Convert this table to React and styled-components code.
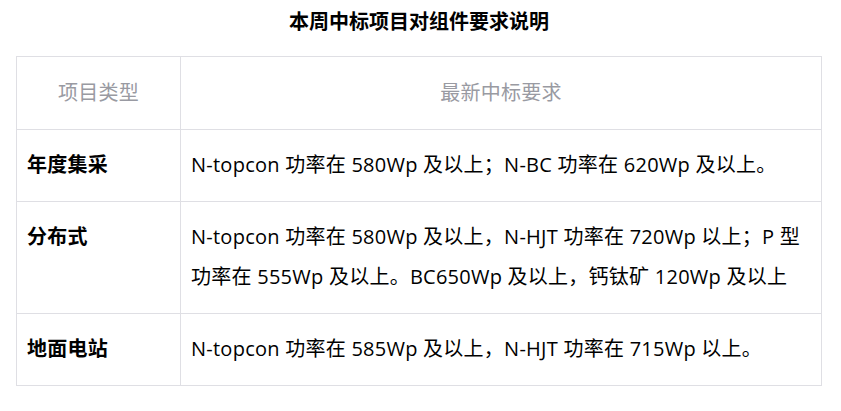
import React from 'react';
import styled, { createGlobalStyle } from 'styled-components';

const GlobalStyle = createGlobalStyle`
  body {
    margin: 0;
    background: #ffffff;
    font-family: "Liberation Sans", "Noto Sans CJK SC", sans-serif;
  }
`;

// 페이지 전체
const Page = styled.div`
  padding: 7px 19px 0 16px;
`;

const Title = styled.h2`
  margin: 0 0 21px;
  text-align: center;
  font-size: 20px;
  line-height: 28px;
  font-weight: 700;
  color: #000;
  font-family: "Noto Sans CJK SC", sans-serif;
`;

const Table = styled.table`
  width: 100%;
  border-collapse: collapse;
  table-layout: fixed;
  font-family: "Open Sans", "Noto Sans CJK SC", sans-serif;
  font-size: 20px;
  line-height: 40px;
  letter-spacing: 0.25px;
  color: #000;
`;

const HeadCell = styled.th`
  border: 1px solid #dfdfe4;
  padding: 16px 10px 16px;
  font-weight: 400;
  color: #999aa2;
  text-align: center;
  width: ${(p) => p.$width || 'auto'};
`;

const Cell = styled.td`
  border: 1px solid #dfdfe4;
  padding: 15px 10px 16px;
  vertical-align: top;
  font-weight: ${(p) => (p.$bold ? 700 : 400)};
`;

const rows = [
  {
    type: '年度集采',
    text: 'N-topcon 功率在 580Wp 及以上；N-BC 功率在 620Wp 及以上。',
  },
  {
    type: '分布式',
    text: 'N-topcon 功率在 580Wp 及以上，N-HJT 功率在 720Wp 以上；P 型功率在 555Wp 及以上。BC650Wp 及以上，钙钛矿 120Wp 及以上',
  },
  {
    type: '地面电站',
    text: 'N-topcon 功率在 585Wp 及以上，N-HJT 功率在 715Wp 以上。',
  },
];

const App = () => {
  return (
    <Page>
      <GlobalStyle />
      <Title>本周中标项目对组件要求说明</Title>
      <Table>
        <thead>
          <tr>
            <HeadCell $width="143px">项目类型</HeadCell>
            <HeadCell>最新中标要求</HeadCell>
          </tr>
        </thead>
        <tbody>
          {rows.map((r) => (
            <tr key={r.type}>
              <Cell $bold>{r.type}</Cell>
              <Cell>{r.text}</Cell>
            </tr>
          ))}
        </tbody>
      </Table>
    </Page>
  );
};

export default App;
